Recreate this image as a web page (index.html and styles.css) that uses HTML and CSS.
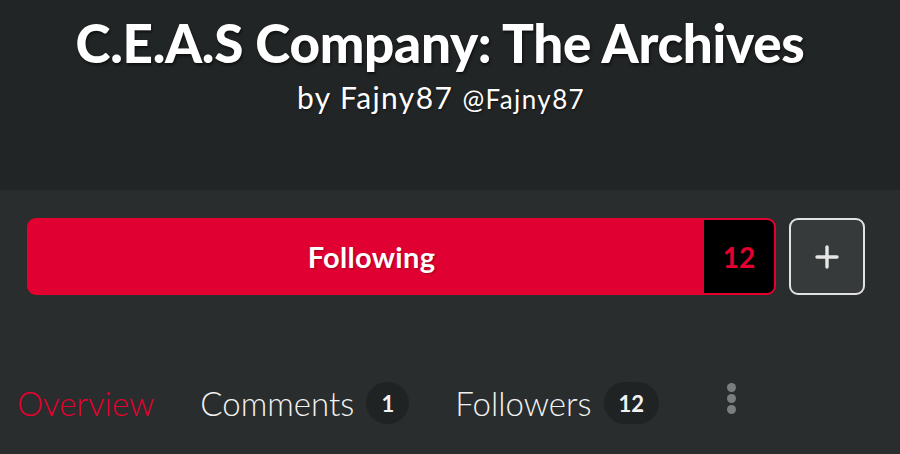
FILE: index.html
```html
<!DOCTYPE html>
<html>
<head>
<meta charset="utf-8">
<link rel="stylesheet" href="styles.css">
</head>
<body>
<header class="hero">
  <h1 class="title">C.E.A.S Company: The Archives</h1>
  <p class="byline">by Fajny87 <span class="handle">@Fajny87</span></p>
</header>
<main class="panel">
  <div class="actions">
    <button class="follow">
      <span class="follow-label">Following</span>
      <span class="follow-count">12</span>
    </button>
    <button class="add" aria-label="Add">
      <svg width="26" height="26" viewBox="0 0 26 26"><path d="M13 3v20M3 13h20" stroke="#e6e6e6" stroke-width="3.4" stroke-linecap="round"/></svg>
    </button>
  </div>
  <nav class="tabs">
    <a class="tab active">Overview</a>
    <a class="tab">Comments <span class="pill">1</span></a>
    <a class="tab">Followers <span class="pill">12</span></a>
    <span class="more"><i></i><i></i><i></i></span>
  </nav>
</main>
</body>
</html>
```
FILE: styles.css
```css
* { box-sizing: border-box; }
html, body { margin: 0; padding: 0; }
body {
  width: 900px;
  height: 454px;
  overflow: hidden;
  background: #292d2d;
  font-family: Lato, "Noto Sans", sans-serif;
  color: #fff;
}
.hero {
  height: 190px;
  background: #222526;
  padding-top: 10px;
  text-align: center;
}
.title {
  margin: 0 0 0 -20px;
  font-family: Lato, sans-serif;
  font-weight: 900;
  font-size: 53px;
  line-height: 66px;
  letter-spacing: -0.3px;
  text-shadow: 1px 2px 3px rgba(0,0,0,0.6);
}
.byline {
  margin: 3px 0 0 -18px;
  font-size: 30px;
  line-height: 36px;
  font-weight: 400;
  letter-spacing: 1.4px;
  text-shadow: 1px 1px 2px rgba(0,0,0,0.5);
}
.handle { font-size: 26px; letter-spacing: 1.4px; }
.panel { padding: 28px 35px 0 27px; }
.actions {
  display: flex;
  gap: 13px;
  height: 77px;
}
.follow {
  flex: 1;
  display: flex;
  padding: 0;
  border: 2px solid #e4002f;
  border-radius: 9px;
  background: #e00032;
  overflow: hidden;
  font-family: Lato, sans-serif;
  cursor: pointer;
}
.follow-label {
  flex: 1;
  align-self: center;
  color: #fff;
  font-weight: 700;
  font-size: 29px;
  letter-spacing: 0.3px;
  padding-left: 10px;
  text-shadow: 1px 1px 2px rgba(0,0,0,0.3);
}
.follow-count {
  width: 70px;
  background: #000;
  color: #e4002f;
  font-weight: 700;
  font-size: 28px;
  display: flex;
  align-items: center;
  justify-content: center;
}
.add {
  width: 76px;
  padding: 0;
  border: 2px solid #e2e2e2;
  border-radius: 9px;
  background: #363a3a;
  display: flex;
  align-items: center;
  justify-content: center;
}
.tabs {
  display: flex;
  align-items: center;
  margin: 76px 0 0 -10px;
  height: 64px;
}
.tab {
  display: flex;
  align-items: center;
  font-size: 33px;
  font-weight: 300;
  color: #f2f2f2;
  margin-right: 46px;
}
.tab.active { color: #e4002f; }
.pill {
  margin-left: 12px;
  min-width: 43px;
  height: 42px;
  padding: 0 15px;
  border-radius: 21px;
  background: #202323;
  font-size: 22px;
  font-weight: 700;
  display: flex;
  align-items: center;
  justify-content: center;
}
.more {
  display: flex;
  flex-direction: column;
  gap: 2px;
  margin-left: 22px;
  margin-top: -10px;
}
.more i {
  width: 9px;
  height: 9px;
  border-radius: 50%;
  background: #7b7e7e;
}
```
